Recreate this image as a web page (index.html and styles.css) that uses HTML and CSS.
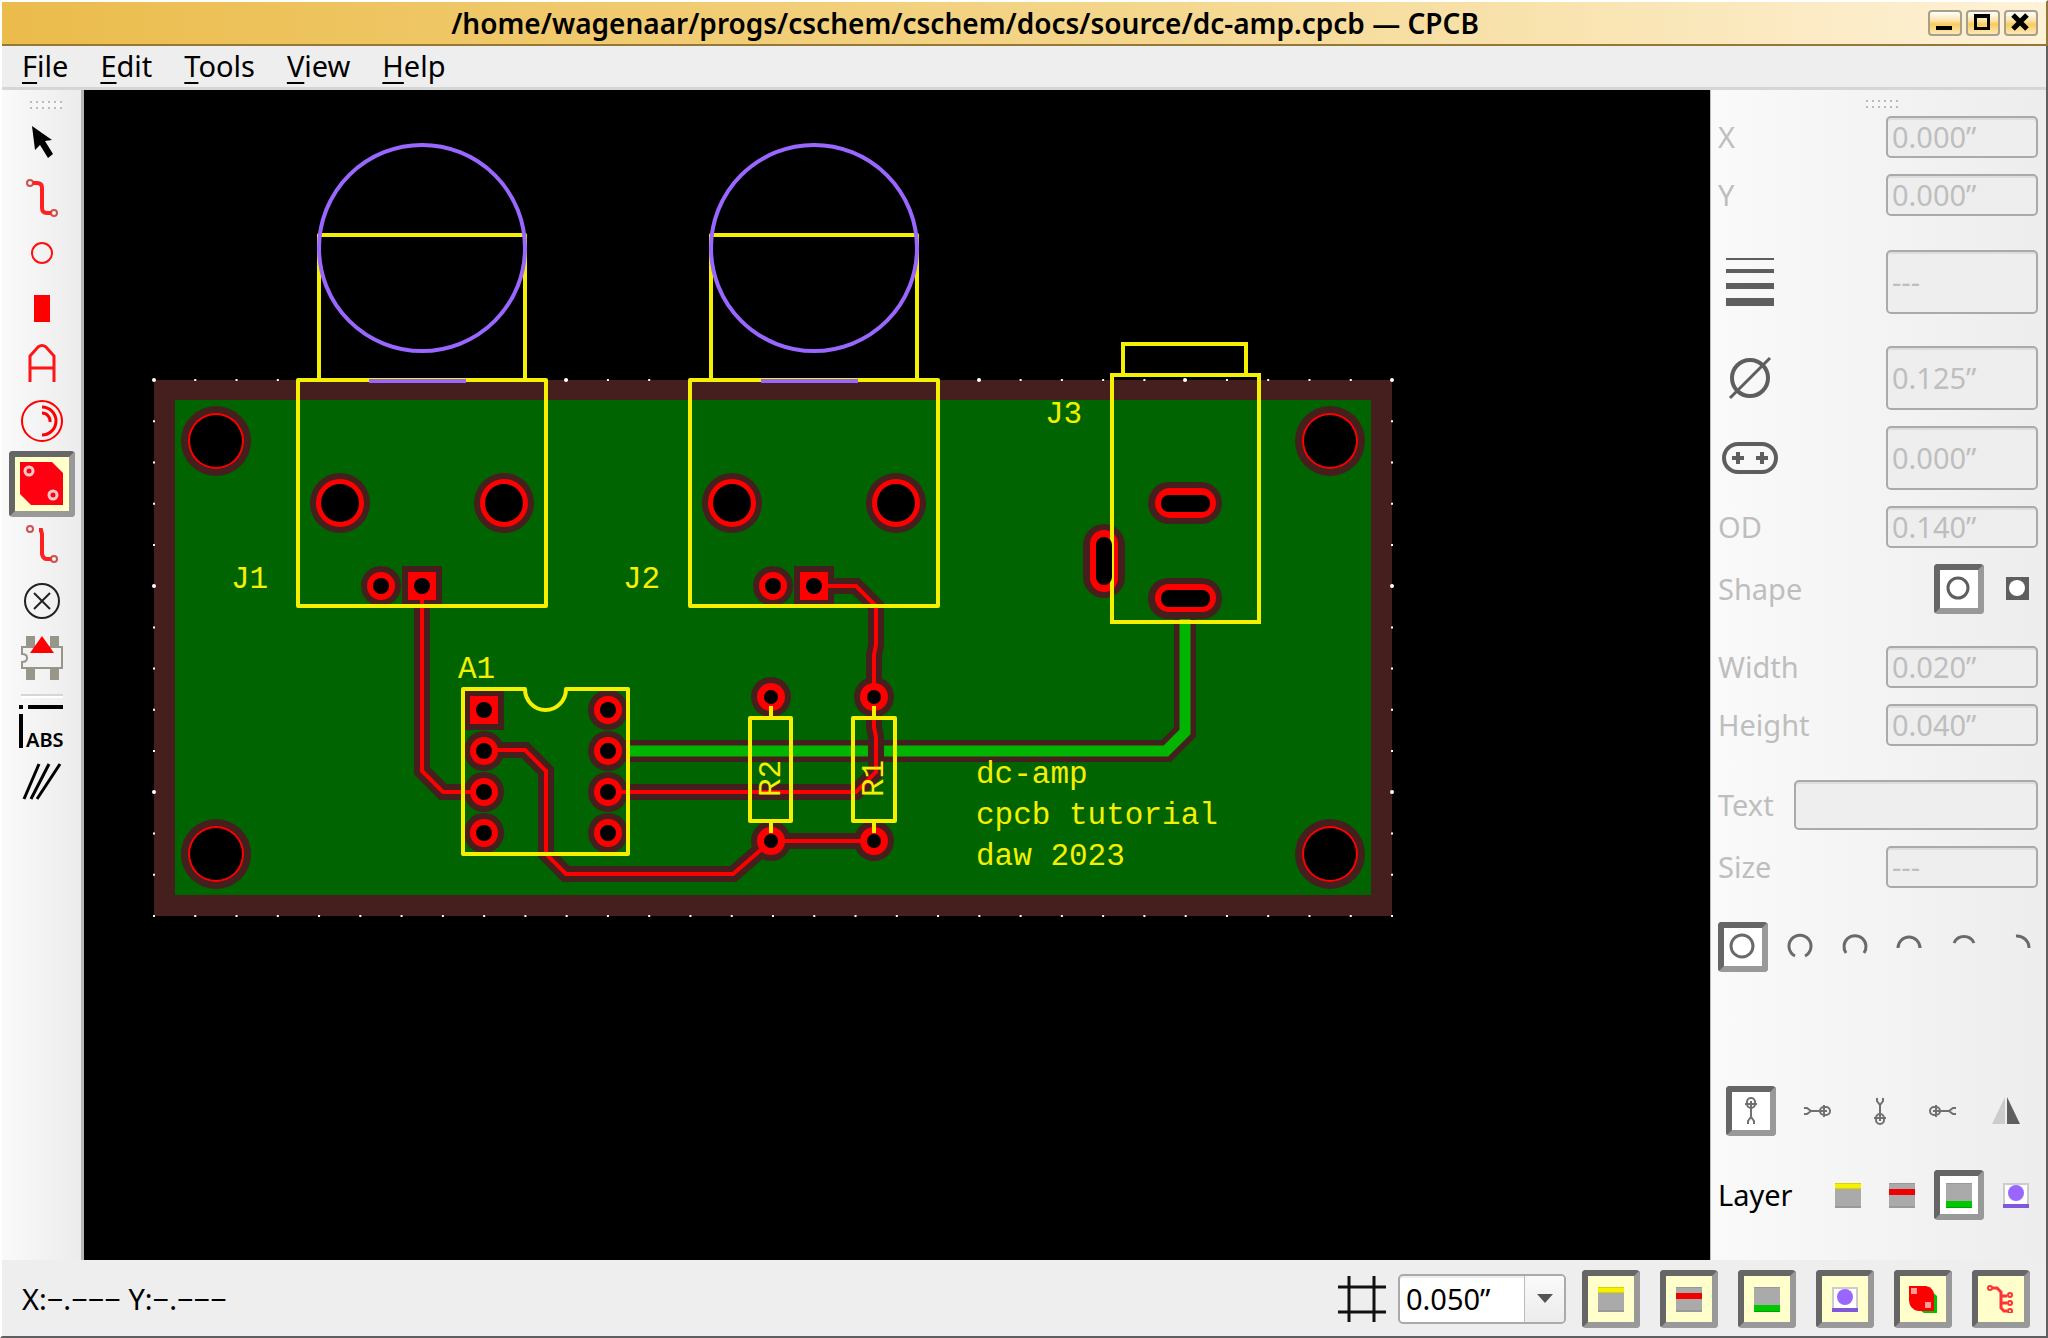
FILE: index.html
```html
<!DOCTYPE html>
<html lang="en">
<head>
<meta charset="utf-8">
<meta name="viewport" content="width=device-width, initial-scale=1">
<title>dc-amp.cpcb — CPCB</title>
<link rel="stylesheet" href="styles.css">
</head>
<body>
<svg class="defs" aria-hidden="true">
  <defs>
    <symbol id="layer-silk" viewBox="0 0 28 28"><path fill="#aaa" d="M1 2h26v25H1z"/><path fill="#999" d="M1 25h26v2H1z"/><path fill="#f5f000" d="M1 2h26v6H1z"/><path fill="#d8d300" d="M1 2h26v1H1zM1 7h26v1H1z"/></symbol>
    <symbol id="layer-top" viewBox="0 0 28 28"><path fill="#aaa" d="M1 2h26v25H1z"/><path fill="#999" d="M1 25h26v2H1zM1 2h26v1H1z"/><path fill="#f00000" d="M1 8h26v6H1z"/></symbol>
    <symbol id="layer-bottom" viewBox="0 0 28 28"><path fill="#aaa" d="M1 2h26v25H1z"/><path fill="#999" d="M1 2h26v1H1z"/><path fill="#00c800" d="M1 20h26v6H1z"/><path fill="#00a000" d="M1 26h26v1H1z"/></symbol>
    <symbol id="layer-panel" viewBox="0 0 28 28"><path fill="#fff" stroke="#ccc" stroke-width="2" d="M2 3h24v22H2z"/><circle cx="14" cy="12" r="8" fill="#9966ff"/><path fill="#8058dc" d="M1 23h26v4H1z"/></symbol>
    <symbol id="person" viewBox="0 0 28 28"><g fill="none" stroke="#707070"><path stroke-width="2" d="M10 5a4 4 0 0 1 8 0v2a4 4 0 0 1-8 0zM8 7h12M14 4v16"/><path stroke-width="2" d="M11 27v-3l3-4 3 4v3"/></g></symbol>
  </defs>
</svg>
<div class="window">
  <header class="titlebar">
    <h1 class="title">/home/wagenaar/progs/cschem/cschem/docs/source/dc-amp.cpcb — CPCB</h1>
    <div class="window-buttons">
      <button class="wbtn" aria-label="Minimize"><svg width="30" height="22"><path fill="#000" d="M6 14h16v4H6z"/></svg></button>
      <button class="wbtn" aria-label="Maximize"><svg width="30" height="22"><path fill="none" stroke="#000" stroke-width="3" d="M7.500 4.500h13v12h-13z"/><path d="M6 2h16v3H6z"/></svg></button>
      <button class="wbtn" aria-label="Close"><svg width="30" height="22"><path stroke="#000" stroke-width="5" d="M7 3l14 14M21 3L7 17"/></svg></button>
    </div>
  </header>
  <nav class="menubar">
    <a href="#file"><u>F</u>ile</a>
    <a href="#edit"><u>E</u>dit</a>
    <a href="#tools"><u>T</u>ools</a>
    <a href="#view"><u>V</u>iew</a>
    <a href="#help"><u>H</u>elp</a>
  </nav>
  <main class="workspace">
    <aside class="toolbar" aria-label="Tools">
      <span class="handle"></span>
      <button class="tool" aria-label="Select"><svg width="48" height="48"><path d="M14 7l20 14-7 1 8 13-5 4-8-13-5 5z"/></svg></button>
      <button class="tool" aria-label="Trace"><svg width="48" height="48" fill="none"><g stroke="#d05050" stroke-width="2"><circle cx="12" cy="8" r="3"/><circle cx="36" cy="38" r="3"/></g><path stroke="#ff2020" stroke-width="4" d="M15 8h4q5 0 5 5v20q0 5 5 5h4"/></svg></button>
      <button class="tool" aria-label="Round pad"><svg width="48" height="48"><circle cx="24" cy="22" r="10" fill="none" stroke="#ff1010" stroke-width="2"/></svg></button>
      <button class="tool" aria-label="Square pad"><svg width="48" height="48"><path fill="#f00" d="M16 8h16v27H16z"/></svg></button>
      <button class="tool" aria-label="Text"><svg width="48" height="48"><path fill="none" stroke="#ff1515" stroke-width="3" d="M12 39V13L20 4Q24 1 28 4L36 13V39M12 25H36"/></svg></button>
      <button class="tool" aria-label="Arc"><svg width="48" height="48" fill="none" stroke="#f00" stroke-width="3"><circle cx="24" cy="22" r="20" stroke-width="2"/><path d="M24 8a14 14 0 0 1 0 28M24 14a8 8 0 0 1 8 9"/></svg></button>
      <button class="tool bevel lit" aria-label="Filled plane" aria-pressed="true"><svg width="54" height="54"><path fill="#ff0010" d="M5 5h32l11 11v32H16L5 37z"/><g fill="#ff0010" stroke="#ffc8c8" stroke-width="3"><circle cx="14" cy="14" r="4"/><circle cx="38" cy="38" r="4"/></g></svg></button>
      <button class="tool" aria-label="Pick up trace"><svg width="48" height="48" fill="none"><g stroke="#d05050" stroke-width="2"><circle cx="12" cy="8" r="3"/><circle cx="36" cy="38" r="3"/></g><path stroke="#ff2020" stroke-width="4" d="M21 9h2l1 4v20q1 5 5 5h4"/></svg></button>
      <button class="tool" aria-label="Non-plated hole"><svg width="48" height="48" fill="none" stroke="#222" stroke-width="2"><circle cx="24" cy="24" r="17"/><path d="M16 16l16 16M32 16L16 32"/></svg></button>
      <button class="tool" aria-label="Component"><svg width="48" height="48"><path fill="#98958a" d="M8 3h9v10H8zM32 3h9v10h-9zM8 36h9v11H8zM32 36h9v11h-9z"/><path fill="#f2f2f2" stroke="#98958a" stroke-width="2" d="M4 14h40v21H4v-6q5 0 5-4t-5-4z"/><path fill="#f00" d="M24 3l12 17H12z"/></svg></button>
      <span class="rule"></span>
      <button class="tool" aria-label="Absolute coordinates"><svg width="56" height="48"><path d="M5 2h4v4H5zM14 2h35v4H14zM5 11h4v34H5z"/><text class="abs" x="12" y="44">ABS</text></svg></button>
      <button class="tool" aria-label="Angle"><svg width="48" height="48"><path fill="none" stroke="#000" stroke-width="3" d="M21 5L6 40M31 5L13 40M42 5L19 40"/></svg></button>
    </aside>

    <section class="canvas" aria-label="Board">
      <svg class="board" viewBox="84 90 1626 1170" preserveAspectRatio="xMinYMin meet">
        <path fill="#451e1e" d="M154 380h1238v536H154z"/>
        <path fill="#006400" d="M175 400h1196v495H175z"/>
        <g fill="none" stroke="#fff">
          <path stroke-width="2" stroke-dasharray="2 39.267" d="M153 380h1240M153 916h1240"/>
          <path stroke-width="2" stroke-dasharray="2 39.231" d="M154 379v538M1392 379v538"/>
          <path stroke-width="4" stroke-linecap="round" d="M154 380h0M566 380h0M979 380h0M1185 380h0M1392 380h0M154 586h0M154 792h0M1392 586h0M1392 792h0"/>
        </g>
        <path fill="none" stroke="#451e1e" stroke-width="22" d="M608 751H1166L1185 732V600"/>
        <path fill="none" stroke="#00b400" stroke-width="11" d="M608 751H1166L1185 732V612"/>
        <path fill="none" stroke="#451e1e" stroke-width="16" d="M422 586V771L443 792H484M484 750H525L546 771V854L566 874H733L771 841H874M608 792H856L876 772V737L874 727V655L876 645V606L856 586H814"/>
        <g fill="#451e1e">
          <circle cx="216" cy="441" r="35"/><circle cx="1330" cy="441" r="35"/><circle cx="216" cy="854" r="35"/><circle cx="1330" cy="854" r="35"/>
          <circle cx="340" cy="503" r="30"/><circle cx="504" cy="503" r="30"/><circle cx="732" cy="503" r="30"/><circle cx="896" cy="503" r="30"/>
          <circle cx="381" cy="586" r="20"/><circle cx="773" cy="586" r="20"/>
          <path d="M402 566h40v40h-40zM794 566h40v40h-40zM464 690h40v40h-40z"/>
          <circle cx="484" cy="751" r="20"/><circle cx="484" cy="792" r="20"/><circle cx="484" cy="833" r="20"/>
          <circle cx="608" cy="710" r="20"/><circle cx="608" cy="751" r="20"/><circle cx="608" cy="792" r="20"/><circle cx="608" cy="833" r="20"/>
          <circle cx="771" cy="697" r="20"/><circle cx="874" cy="697" r="20"/><circle cx="771" cy="841" r="20"/><circle cx="874" cy="841" r="20"/>
          <rect x="1148" y="482" width="74" height="42" rx="21"/><rect x="1148" y="578" width="74" height="41" rx="20"/><rect x="1083" y="524" width="42" height="74" rx="21"/>
        </g>
        <path fill="none" stroke="#f00" stroke-width="4" d="M422 586V771L443 792H484M484 750H525L546 771V854L566 874H733L771 841H874M608 792H856L876 772V737L874 727V655L876 645V606L856 586H814"/>
        <g fill="#f00">
          <circle cx="216" cy="441" r="28"/><circle cx="1330" cy="441" r="28"/><circle cx="216" cy="854" r="28"/><circle cx="1330" cy="854" r="28"/>
          <circle cx="340" cy="503" r="24"/><circle cx="504" cy="503" r="24"/><circle cx="732" cy="503" r="24"/><circle cx="896" cy="503" r="24"/>
          <circle cx="381" cy="586" r="14"/><circle cx="773" cy="586" r="14"/>
          <path d="M408 572h28v28h-28zM800 572h28v28h-28zM470 696h28v28h-28z"/>
          <circle cx="484" cy="751" r="14"/><circle cx="484" cy="792" r="14"/><circle cx="484" cy="833" r="14"/>
          <circle cx="608" cy="710" r="14"/><circle cx="608" cy="751" r="14"/><circle cx="608" cy="792" r="14"/><circle cx="608" cy="833" r="14"/>
          <circle cx="771" cy="697" r="14"/><circle cx="874" cy="697" r="14"/><circle cx="771" cy="841" r="14"/><circle cx="874" cy="841" r="14"/>
          <rect x="1155" y="488" width="61" height="30" rx="15"/><rect x="1155" y="584" width="61" height="28" rx="14"/><rect x="1090" y="530" width="28" height="62" rx="14"/>
        </g>
        <g fill="none" stroke="#f5f000" stroke-width="4" stroke-linejoin="round">
          <path d="M298 380h248v226H298zM319 380V235H525V380"/>
          <path d="M690 380h248v226H690zM711 380V235H917V380"/>
          <path d="M1112 375h147v247h-147zM1123 375V344H1246V375" stroke-linejoin="miter"/>
          <path d="M463 689H525A20.500 21 0 0 0 566 689H628V854H463z"/>
          <path d="M750 718h41v103h-41zM771 706v12M771 821v12M853 718h42v103h-42zM874 706v12M874 821v12"/>
        </g>
        <g>
          <circle cx="216" cy="441" r="26"/><circle cx="1330" cy="441" r="26"/><circle cx="216" cy="854" r="26"/><circle cx="1330" cy="854" r="26"/>
          <circle cx="340" cy="503" r="19"/><circle cx="504" cy="503" r="19"/><circle cx="732" cy="503" r="19"/><circle cx="896" cy="503" r="19"/>
          <circle cx="381" cy="586" r="8"/><circle cx="422" cy="586" r="8"/><circle cx="773" cy="586" r="8"/><circle cx="814" cy="586" r="8"/>
          <circle cx="484" cy="710" r="8"/><circle cx="484" cy="751" r="8"/><circle cx="484" cy="792" r="8"/><circle cx="484" cy="833" r="8"/>
          <circle cx="608" cy="710" r="8"/><circle cx="608" cy="751" r="8"/><circle cx="608" cy="792" r="8"/><circle cx="608" cy="833" r="8"/>
          <circle cx="771" cy="697" r="7"/><circle cx="874" cy="697" r="7"/><circle cx="771" cy="841" r="7"/><circle cx="874" cy="841" r="7"/>
          <rect x="1161" y="495" width="49" height="17" rx="8"/><rect x="1161" y="590" width="49" height="17" rx="8"/><rect x="1096" y="537" width="16" height="48" rx="8"/>
        </g>
        <g fill="none" stroke="#9966ff" stroke-width="4">
          <circle cx="422" cy="248" r="103"/><circle cx="814" cy="248" r="103"/><path d="M369 381h97M761 381h97"/>
        </g>
        <g class="silk">
          <text x="231" y="588">J1</text><text x="623" y="588">J2</text><text x="1045" y="423">J3</text><text x="458" y="678">A1</text>
          <text transform="translate(780 797) rotate(-90)">R2</text><text transform="translate(883 797) rotate(-90)">R1</text>
          <text x="976" y="783">dc-amp</text><text x="976" y="824">cpcb tutorial</text><text x="976" y="865">daw 2023</text>
        </g>
      </svg>
    </section>

    <aside class="panel" aria-label="Properties">
      <span class="handle"></span>
      <div class="group first">
        <div class="row"><label for="px">X</label><input id="px" type="text" value="0.000”" disabled></div>
        <div class="row"><label for="py">Y</label><input id="py" type="text" value="0.000”" disabled></div>
      </div>
      <div class="group">
        <div class="row"><label for="lw" aria-label="Line width"><svg width="64" height="64"><path fill="#5e5e5e" d="M8 8h48v2H8zM8 19h48v4H8zM8 33h48v6H8zM8 48h48v8H8z"/></svg></label><input id="lw" class="tall" type="text" value="---" disabled></div>
      </div>
      <div class="group tight">
        <div class="row"><label for="dia" aria-label="Diameter"><svg width="64" height="64" fill="none" stroke="#5e5e5e" stroke-width="4"><circle cx="32" cy="32" r="18"/><path d="M12 52L52 12" stroke-width="3"/></svg></label><input id="dia" class="tall" type="text" value="0.125”" disabled></div>
        <div class="row"><label for="slot" aria-label="Slot length"><svg width="64" height="64" fill="none" stroke="#5e5e5e" stroke-width="4"><rect x="6" y="18" width="52" height="28" rx="14"/><path d="M14 32h12M20 26v12M38 32h12M44 26v12"/></svg></label><input id="slot" class="tall" type="text" value="0.000”" disabled></div>
        <div class="row"><label for="od">OD</label><input id="od" type="text" value="0.140”" disabled></div>
        <div class="row"><span class="dim">Shape</span>
          <div class="choices">
            <button class="bevel small" aria-label="Round" aria-pressed="true"><svg width="28" height="28"><circle cx="13" cy="13" r="10" fill="none" stroke="#5e5e5e" stroke-width="3"/></svg></button>
            <button class="flat" aria-label="Square"><svg width="28" height="28"><path fill="#5e5e5e" d="M4 2h23v23H4z"/><circle cx="15" cy="13" r="8" fill="#fff"/></svg></button>
          </div>
        </div>
      </div>
      <div class="group tight">
        <div class="row"><label for="w">Width</label><input id="w" type="text" value="0.020”" disabled></div>
        <div class="row"><label for="h">Height</label><input id="h" type="text" value="0.040”" disabled></div>
      </div>
      <div class="group">
        <div class="row"><label for="txt">Text</label><input id="txt" class="wide" type="text" value="" disabled></div>
        <div class="row"><label for="size">Size</label><input id="size" type="text" value="---" disabled></div>
      </div>
      <div class="group">
        <div class="row arcs">
          <button class="bevel small" aria-label="Full circle" aria-pressed="true"><svg width="28" height="28"><circle class="arc" cx="13" cy="13" r="11"/></svg></button>
          <button class="flat" aria-label="300 degree arc"><svg width="28" height="28"><path class="arc" d="M9 23A11 11 0 1 1 19 23"/></svg></button>
          <button class="flat" aria-label="240 degree arc"><svg width="28" height="28"><path class="arc" d="M5 20A11 11 0 1 1 23 20"/></svg></button>
          <button class="flat" aria-label="180 degree arc"><svg width="28" height="28"><path class="arc" d="M3 15A11 11 0 0 1 25 15"/></svg></button>
          <button class="flat" aria-label="120 degree arc"><svg width="28" height="28"><path class="arc" d="M4 10A11 11 0 0 1 24 10"/></svg></button>
          <button class="flat" aria-label="90 degree arc"><svg width="28" height="28"><path class="arc" d="M12 3A12 12 0 0 1 25 15"/></svg></button>
        </div>
      </div>
      <div class="group spaced">
        <div class="row inset">
          <button class="bevel small" aria-label="Upright" aria-pressed="true"><svg width="28" height="28"><use href="#person"/></svg></button>
          <button class="flat" aria-label="Rotated right"><svg class="r90" width="28" height="28"><use href="#person"/></svg></button>
          <button class="flat" aria-label="Upside down"><svg class="r180" width="28" height="28"><use href="#person"/></svg></button>
          <button class="flat" aria-label="Rotated left"><svg class="r270" width="28" height="28"><use href="#person"/></svg></button>
          <button class="flat" aria-label="Flip"><svg width="28" height="28"><path fill="#ccc" d="M13 0v27H0z"/><path fill="#5e5e5e" d="M15 0v27h13z"/></svg></button>
        </div>
      </div>
      <div class="group">
        <div class="row"><span>Layer</span>
          <div class="choices">
            <button class="flat" aria-label="Silk"><svg width="28" height="28"><use href="#layer-silk"/></svg></button>
            <button class="flat" aria-label="Top"><svg width="28" height="28"><use href="#layer-top"/></svg></button>
            <button class="bevel small" aria-label="Bottom" aria-pressed="true"><svg width="28" height="28"><use href="#layer-bottom"/></svg></button>
            <button class="flat" aria-label="Panel"><svg width="28" height="28"><use href="#layer-panel"/></svg></button>
          </div>
        </div>
      </div>
    </aside>
  </main>
  <footer class="statusbar">
    <span class="coords">X:−.−−− Y:−.−−−</span>
    <svg class="grid-icon" width="48" height="48"><path fill="none" stroke="#111" stroke-width="3" d="M11 1v46M36 1v46M0 12h48M0 37h48"/></svg>
    <div class="combo">
      <select aria-label="Grid spacing"><option>0.050”</option></select>
      <span class="drop"><svg width="16" height="10"><path fill="#555" d="M0 0h16L8 9z"/></svg></span>
    </div>
    <div class="toggles">
      <button class="bevel lit" aria-label="Show silk" aria-pressed="true"><svg width="28" height="28"><use href="#layer-silk"/></svg></button>
      <button class="bevel lit" aria-label="Show top" aria-pressed="true"><svg width="28" height="28"><use href="#layer-top"/></svg></button>
      <button class="bevel lit" aria-label="Show bottom" aria-pressed="true"><svg width="28" height="28"><use href="#layer-bottom"/></svg></button>
      <button class="bevel lit" aria-label="Show panel" aria-pressed="true"><svg width="28" height="28"><use href="#layer-panel"/></svg></button>
      <button class="bevel lit" aria-label="Show planes" aria-pressed="true"><svg width="28" height="28"><path fill="#00c000" d="M9 5h12l7 6v17H15l-6-4z"/><path fill="#f00" d="M0 1h17q8 2 8 9v16H9q-9-2-9-11z"/><path fill="#ff9a9a" d="M2 3h6v6H2zM16 17h6v6h-6z"/></svg></button>
      <button class="bevel lit" aria-label="Show nets" aria-pressed="true"><svg width="28" height="28" fill="none" stroke="#f33"><path stroke-width="3" d="M5 3h5l4 4v16l3 3h3M14 11h6M14 18h6"/><g stroke-width="2"><circle cx="3" cy="3" r="2"/><circle cx="23" cy="10" r="2"/><circle cx="23" cy="18" r="2"/><circle cx="23" cy="26" r="2"/></g></svg></button>
    </div>
  </footer>
</div>
</body>
</html>
```

FILE: styles.css
```css
* { box-sizing: border-box; }
body {
  margin: 0;
  background: #eee;
  color: #000;
  font: 29px/40px "Noto Sans", sans-serif;
}
.defs { position: absolute; width: 0; height: 0; }
svg { display: block; flex: none; }
button { margin: 0; padding: 0; border: 0; background: none; color: inherit; display: flex; align-items: center; justify-content: center; }
.window {
  min-height: 100vh;
  display: flex;
  flex-direction: column;
  border: 2px solid #fff;
  border-right-color: #5f5f61;
  border-bottom-color: #5f5f61;
}

/* title bar */
.titlebar {
  display: flex;
  align-items: center;
  height: 44px;
  margin-right: -2px;
  padding-right: 8px;
  border-bottom: 2px solid #957835;
  border-right: 2px solid #957835;
  background: linear-gradient(90deg, #ebbc4c, #f4d68b 55%, #fef2d8);
}
.title { flex: 1; margin: 0; font-size: 28px; font-weight: 600; line-height: 40px; text-align: center; white-space: nowrap; }
.window-buttons { display: flex; gap: 4px; }
.wbtn {
  width: 34px;
  height: 26px;
  border: 2px solid #aaa08a;
  border-radius: 4px;
  background: linear-gradient(#fff, #fbe3a8 40%, #f9cb5c 55%, #fde9b8);
}

/* menu bar */
.menubar {
  display: flex;
  gap: 32px;
  height: 44px;
  padding: 0 20px;
  border-bottom: 3px solid #d6d6d6;
}
.menubar a { color: inherit; text-decoration: none; }
.menubar u { text-decoration-thickness: 2px; text-underline-offset: 5px; }

.workspace { flex: 1; display: flex; align-items: stretch; }

.handle {
  flex: none;
  align-self: center;
  width: 32px;
  height: 8px;
  margin: 10px 0 6px 8px;
  background: repeating-linear-gradient(90deg, transparent 0 2px, #f6f6f6 2px 6px), repeating-linear-gradient(#bbb 0 2px, #f6f6f6 2px 6px);
}

/* tool column */
.toolbar {
  flex: none;
  width: 82px;
  display: flex;
  flex-direction: column;
  align-items: center;
  padding-top: 1px;
  border-right: 3px solid #b5b5b5;
  background: linear-gradient(90deg, #fafafa, #ececec);
}
.tool { width: 66px; height: 56px; }
.rule { width: 42px; height: 4px; margin: 9px 0 1px; background: #fff; border-top: 2px solid #d6d6d6; }
.abs { font: 600 20px "Noto Sans", sans-serif; }

.bevel {
  width: 58px;
  height: 58px;
  border: 6px solid;
  border-color: #666 #999 #999 #666;
  border-radius: 4px;
  background: #fff;
}
.bevel.small { width: 50px; height: 50px; }
.bevel.tool { width: 66px; height: 66px; }
.bevel.lit { background: #ffc; }
.flat { width: 44px; height: 50px; }

/* drawing area */
.canvas { flex: 1; min-width: 0; background: #000; }
.board { width: 100%; height: auto; }
.silk {
  fill: #f5f000;
  font: 31px "Liberation Mono", monospace;
}

/* properties */
.panel {
  flex: none;
  width: 336px;
  display: flex;
  flex-direction: column;
  padding: 0 8px 0 7px;
  border-left: 1px solid #bbb;
  background: linear-gradient(90deg, #fafafa, #ededed);
}
.group { display: flex; flex-direction: column; gap: 16px; margin-top: 34px; }
.group.first { margin-top: 2px; }
.group.tight { margin-top: 32px; }
.group.spaced { margin-top: 114px; }
.row { display: flex; align-items: center; justify-content: space-between; }
.row.arcs { margin-right: -2px; }
.row.inset { padding: 0 10px 0 8px; }
.row label, .dim { color: #bebebe; }
.choices { display: flex; gap: 10px; }
.row input {
  width: 152px;
  height: 42px;
  padding: 0 4px 2px;
  border: 2px solid #aaa;
  border-radius: 5px;
  background: #eee;
  box-shadow: inset 0 2px #ddd;
  color: #bebebe;
  font: inherit;
}
.row input.tall { height: 64px; }
.row input.wide { width: 244px; height: 50px; }
.arc { fill: none; stroke: #6a6a6a; stroke-width: 3px; }
.r90 { transform: rotate(90deg); }
.r180 { transform: rotate(180deg); }
.r270 { transform: rotate(270deg); }

/* status bar */
.statusbar { display: flex; align-items: center; height: 76px; padding: 1px 16px 0 20px; }
.coords { flex: 1; }
.combo { position: relative; width: 168px; margin: 0 16px 0 12px; }
.combo select {
  display: block;
  width: 100%;
  height: 50px;
  padding: 0 6px;
  appearance: none;
  border: 2px solid #aaa;
  border-radius: 5px;
  background: #fff;
  box-shadow: inset 0 2px #eee;
  color: #000;
  font: inherit;
}
.drop {
  position: absolute;
  top: 2px;
  right: 2px;
  bottom: 2px;
  width: 40px;
  display: flex;
  align-items: center;
  justify-content: center;
  border-left: 1px solid #bbb;
  border-radius: 0 3px 3px 0;
  background: linear-gradient(#fafafa, #ececec);
  pointer-events: none;
}
.toggles { display: flex; gap: 20px; }
```
